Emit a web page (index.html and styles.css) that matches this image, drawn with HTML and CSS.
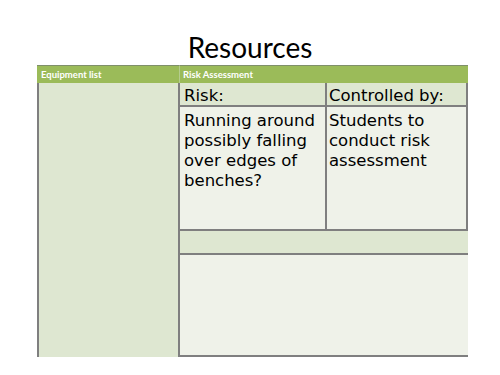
FILE: index.html
```html
<!DOCTYPE html>
<html>
<head>
<meta charset="utf-8">
<link rel="stylesheet" href="styles.css">
</head>
<body>
<div class="slide">
  <h1 class="title">Resources</h1>
  <div class="table">
    <div class="hd hd-left">Equipment list</div>
    <div class="hd hd-right">Risk Assessment</div>
    <div class="equip"></div>
    <div class="cell label risk-col">Risk:</div>
    <div class="cell label ctrl-col">Controlled by:</div>
    <div class="cell body risk-col">Running around possibly falling over edges of benches?</div>
    <div class="cell body ctrl-col">Students to conduct risk assessment</div>
    <div class="band"></div>
    <div class="bottom"></div>
  </div>
</div>
</body>
</html>
```

FILE: styles.css
```css
html, body {
  margin: 0;
  padding: 0;
  background: #ffffff;
}

.slide {
  width: 500px;
  height: 375px;
  display: flex;
  flex-direction: column;
  align-items: stretch;
}

.title {
  margin: 30px 0 1px 0;
  font-family: Lato, "Liberation Sans", sans-serif;
  font-weight: 400;
  font-size: 28px;
  line-height: 34px;
  color: #000;
  text-align: center;
}

.table {
  margin-left: 37px;
  width: 431px;
  display: grid;
  grid-template-columns: 143px 145px 143px;
  grid-template-rows: 18px 24px 124px 24px 102px;
  font-family: "DejaVu Sans", Verdana, sans-serif;
}

.hd {
  background: #9bbb59;
  color: #ffffff;
  font-family: Lato, "Liberation Sans", sans-serif;
  font-weight: 700;
  font-size: 9.5px;
  line-height: 17px;
  padding-left: 4px;
  border-top: 1px solid #7f8f6a;
  box-sizing: border-box;
}

.hd-left {
  grid-column: 1;
  border-right: 1px solid #b5cc8e;
}

.hd-right {
  grid-column: 2 / 4;
  padding-left: 3px;
}

.equip {
  grid-column: 1;
  grid-row: 2 / 6;
  background: #dee7d1;
  border-left: 2px solid #7f7f7f;
  border-right: 2px solid #7f7f7f;
  box-sizing: border-box;
}

.cell {
  box-sizing: border-box;
  font-size: 16.5px;
  line-height: 20px;
  color: #000;
  padding: 3px 2px 0 4px;
}

.label {
  grid-row: 2;
  background: #dee7d1;
  border-bottom: 2px solid #7f7f7f;
}

.body {
  grid-row: 3;
  background: #eff2e9;
  border-bottom: 2px solid #7f7f7f;
  padding-top: 4px;
}

.risk-col {
  grid-column: 2;
  padding-left: 4px;
}

.ctrl-col {
  grid-column: 3;
  border-left: 2px solid #7f7f7f;
  border-right: 2px solid #7f7f7f;
  padding-left: 2px;
}

.band {
  grid-column: 2 / 4;
  grid-row: 4;
  background: #dee7d1;
  border-bottom: 2px solid #7f7f7f;
  box-sizing: border-box;
}

.bottom {
  grid-column: 2 / 4;
  grid-row: 5;
  background: #eff2e9;
  border-bottom: 2px solid #7f7f7f;
  box-sizing: border-box;
}
```
